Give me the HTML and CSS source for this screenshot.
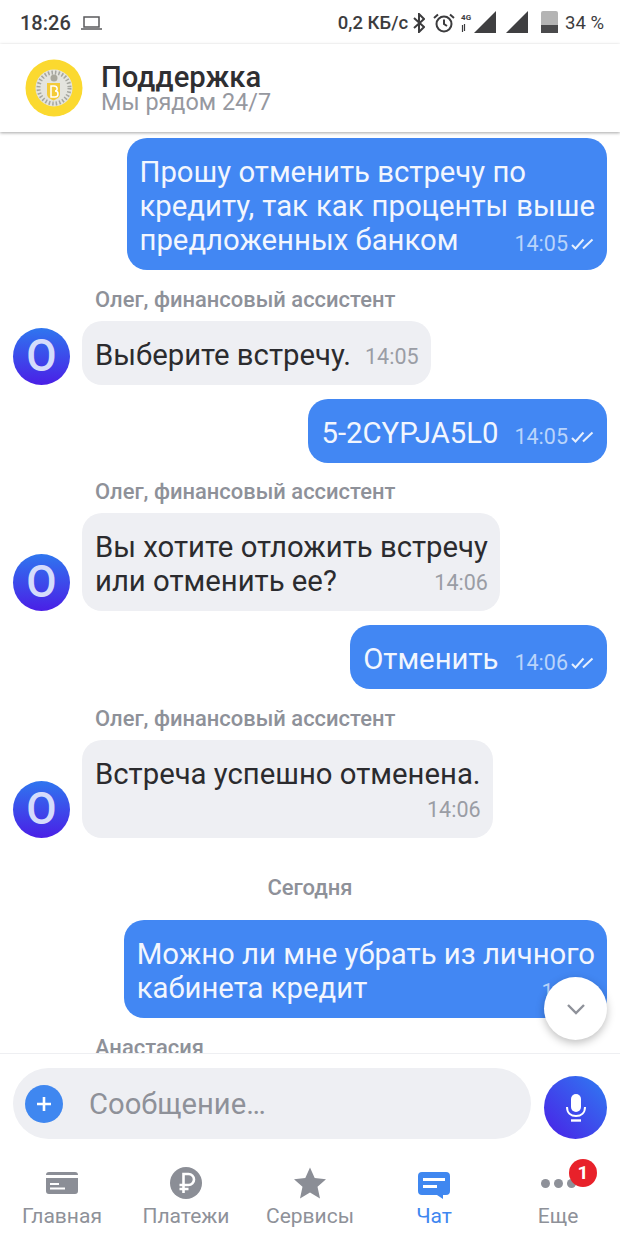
FILE: index.html
```html
<!DOCTYPE html>
<html lang="ru">
<head>
<meta charset="utf-8">
<title>Поддержка</title>
<link rel="stylesheet" href="styles.css">
</head>
<body>
<div class="app">
  <div class="status">
    <div class="status-left">
      <span class="clock">18:26</span>
      <svg class="ic-laptop" viewBox="0 0 21 14"><path d="M3 1h15v10H3zM0 13h21" fill="none" stroke="#5a5a5c" stroke-width="1.5"/></svg>
    </div>
    <div class="status-right">
      <span class="speed">0,2 КБ/с</span>
      <svg class="ic-bt" viewBox="0 0 12 20"><path d="M1 5l10 9-5 5V1l5 5L1 15" fill="none" stroke="#3c3c3e" stroke-width="2"/></svg>
      <svg class="ic-alarm" viewBox="0 0 22 20"><circle cx="11" cy="11" r="7.5" fill="none" stroke="#3c3c3e" stroke-width="2"/><path d="M11 6.5V11l3 2M1 5l4-3.5M21 5l-4-3.5" fill="none" stroke="#3c3c3e" stroke-width="2"/></svg>
      <div class="net"><span>4G</span><svg viewBox="0 0 5 8"><path d="M1.5 8V1M3.5 0v7" stroke="#3c3c3e" stroke-width="1.2"/></svg></div>
      <svg class="ic-signal" viewBox="0 0 22 22"><path d="M0 22L22 0v22z" fill="#3f3f41"/></svg>
      <svg class="ic-signal sim2" viewBox="0 0 22 22"><path d="M0 22L22 0v22z" fill="#3f3f41"/></svg>
      <div class="battery"></div>
      <span class="pct">34 %</span>
    </div>
  </div>

  <header class="head">
    <svg class="logo" viewBox="0 0 58 58">
      <circle cx="29" cy="29" r="28.500" fill="#fbd92f"/>
      <circle cx="29" cy="29" r="18.500" fill="#e4e4de"/>
      <circle cx="29" cy="29" r="15.500" fill="none" stroke="#a5a69f" stroke-width="4" stroke-dasharray="1.500 2"/>
      <circle cx="29" cy="19" r="3.500" fill="#a9a89c"/>
      <path d="M22 24h13v11c0 4-4 5-6.500 6.500C26 40 22 39 22 35z" fill="#f4cb38"/>
      <path d="M26 27h3c4 0 4 5 1 5 4 0 4 6 0 6h-4z" fill="none" stroke="#fff" stroke-width="1.500"/>
    </svg>
    <div class="head-text">
      <h1>Поддержка</h1>
      <p>Мы рядом 24/7</p>
    </div>
  </header>

  <main class="chat">
    <div class="msg out">
      <div class="bubble">
        <div>Прошу отменить встречу по</div>
        <div class="line-wide">кредиту, так как проценты выше</div>
        <div class="tail"><span>предложенных банком</span><span class="meta">14:05<svg class="ticks" viewBox="0 0 24 12"><path d="M1 7l3.500 3.500L12.500 1.500M12 10.500L21.500 1.500" fill="none" stroke="#e6effd" stroke-width="2"/></svg></span></div>
      </div>
    </div>

    <div class="name">Олег, финансовый ассистент</div>
    <div class="msg in">
      <div class="avatar">О</div>
      <div class="bubble">
        <div class="tail"><span>Выберите встречу.</span><span class="meta">14:05</span></div>
      </div>
    </div>

    <div class="msg out gap">
      <div class="bubble">
        <div class="tail"><span>5-2CYPJA5L0</span><span class="meta">14:05<svg class="ticks" viewBox="0 0 24 12"><path d="M1 7l3.500 3.500L12.500 1.500M12 10.500L21.500 1.500" fill="none" stroke="#e6effd" stroke-width="2"/></svg></span></div>
      </div>
    </div>

    <div class="name">Олег, финансовый ассистент</div>
    <div class="msg in">
      <div class="avatar">О</div>
      <div class="bubble">
        <div>Вы хотите отложить встречу</div>
        <div class="tail"><span>или отменить ее?</span><span class="meta">14:06</span></div>
      </div>
    </div>

    <div class="msg out gap">
      <div class="bubble">
        <div class="tail"><span>Отменить</span><span class="meta">14:06<svg class="ticks" viewBox="0 0 24 12"><path d="M1 7l3.500 3.500L12.500 1.500M12 10.500L21.500 1.500" fill="none" stroke="#e6effd" stroke-width="2"/></svg></span></div>
      </div>
    </div>

    <div class="name">Олег, финансовый ассистент</div>
    <div class="msg in">
      <div class="avatar">О</div>
      <div class="bubble">
        <div>Встреча успешно отменена.</div>
        <div class="tail end"><span class="meta">14:06</span></div>
      </div>
    </div>

    <div class="day">Сегодня</div>

    <div class="msg out">
      <div class="bubble">
        <div>Можно ли мне убрать из личного</div>
        <div class="tail"><span>кабинета кредит</span><span class="meta">11:52</span></div>
      </div>
    </div>

    <div class="name">Анастасия</div>

    <button class="scroll-down" aria-label="Вниз">
      <svg viewBox="0 0 20 12"><path d="M2 2l8 8 8-8" fill="none" stroke="#8e9199" stroke-width="2.400"/></svg>
    </button>
  </main>

  <div class="composer">
    <div class="input">
      <span class="plus"><svg viewBox="0 0 16 16"><path d="M8 1v14M1 8h14" stroke="#fff" stroke-width="2.600"/></svg></span>
      <span class="placeholder">Сообщение…</span>
    </div>
    <div class="mic">
      <svg viewBox="0 0 20 28"><rect x="5" y="0" width="10" height="18" rx="5" fill="#fff"/><path d="M1 13c0 6 4 9 9 9s9-3 9-9" fill="none" stroke="#fff" stroke-width="2"/><path d="M5 26.500h10" stroke="#fff" stroke-width="2.400"/></svg>
    </div>
  </div>

  <nav class="tabs">
    <div class="tab">
      <svg class="tab-ic" viewBox="0 0 32 22"><path d="M3 0h26a3 3 0 0 1 3 3H0a3 3 0 0 1 3-3zM0 6h32v13a3 3 0 0 1-3 3H3a3 3 0 0 1-3-3zM4 11v2h9v-2zM4 15.500v2h15v-2z" fill="#8b8e96" fill-rule="evenodd"/></svg>
      <span>Главная</span>
    </div>
    <div class="tab">
      <svg class="tab-ic" viewBox="0 0 32 32"><circle cx="16" cy="16" r="16" fill="#8b8e96"/><path d="M13.500 26V7h5a5.500 5.500 0 0 1 0 11H9.500M9.500 22h9" fill="none" stroke="#fff" stroke-width="2.600"/></svg>
      <span>Платежи</span>
    </div>
    <div class="tab">
      <svg class="tab-ic" viewBox="0 0 32 31"><path d="M16 0l4.700 10.500 11.300 1.200-8.500 7.600L26 31l-10-6-10 6 2.500-11.700L0 11.700l11.300-1.200z" fill="#8b8e96"/></svg>
      <span>Сервисы</span>
    </div>
    <div class="tab active">
      <svg class="tab-ic" viewBox="0 0 32 27" preserveAspectRatio="xMidYMax meet"><path d="M4 0h24a4 4 0 0 1 4 4v15a4 4 0 0 1-4 4h-3v4l-6-4H4a4 4 0 0 1-4-4V4a4 4 0 0 1 4-4zM5 6v3h22V6zM5 13v3h14v-3z" fill="#3f87f0" fill-rule="evenodd"/></svg>
      <span>Чат</span>
    </div>
    <div class="tab">
      <div class="more"><i></i><i></i><i></i><b class="badge">1</b></div>
      <span>Еще</span>
    </div>
  </nav>
</div>
</body>
</html>
```

FILE: styles.css
```css
* { box-sizing: border-box; }
html, body { margin: 0; padding: 0; }
body { font-family: Roboto, "Noto Sans", sans-serif; background: #fff; color: #2b2b2e; }

.app { width: 620px; height: 1240px; display: flex; flex-direction: column; overflow: hidden; }

.status { height: 44px; flex: none; display: flex; justify-content: space-between; align-items: center; padding: 1px 16px 0 20px; color: #3c3c3e; }
.status-left, .status-right { display: flex; align-items: center; }
.clock { font-size: 20px; font-weight: 500; }
.ic-laptop { width: 21px; height: 14px; margin-left: 10px; }
.speed { font-size: 18.5px; font-weight: 500; }
.ic-bt { width: 12px; height: 20px; margin-left: 5px; }
.ic-alarm { width: 22px; height: 20px; margin-left: 8px; }
.net { width: 13px; margin-left: 6px; display: flex; flex-direction: column; align-items: flex-start; font-size: 8px; font-weight: 700; line-height: 9px; }
.net svg { width: 5px; height: 8px; margin-top: 2px; }
.ic-signal { width: 22px; height: 22px; margin-top: -2px; }
.sim2 { margin-left: 10px; }
.battery { width: 17px; height: 22px; margin: -2px 0 0 13px; background: linear-gradient(#b4b4b4 0 64%, #4a4a4c 64%); border-radius: 2px 2px 0 0; }
.pct { font-size: 18.5px; margin-left: 7px; }

.head { height: 88px; flex: none; display: flex; align-items: flex-start; padding: 15px 0 0 25px; box-shadow: 0 1px 3px rgba(0,0,0,.35); position: relative; z-index: 2; background: #fff; }
.logo { width: 58px; height: 58px; flex: none; }
.head-text { margin-left: 18px; display: flex; flex-direction: column; }
.head-text h1 { margin: 5px 0 0; font-size: 29.2px; line-height: 26px; font-weight: 500; color: #2f2f32; }
.head-text p { margin: 1px 0 0; font-size: 23.4px; line-height: 22px; color: #96989f; }

.chat { flex: 1; min-height: 0; overflow: hidden; position: relative; padding: 6px 13px 0; display: flex; flex-direction: column; font-size: 29.3px; line-height: 34px; }
.msg { display: flex; flex: none; }
.msg.out { justify-content: flex-end; }
.msg.in { align-items: flex-end; gap: 12px; }
.msg.gap { margin-top: 14px; }

.bubble { padding: 17px 12px 13px 13px; border-radius: 20px; white-space: nowrap; }
.out .bubble { background: #4287f3; color: #f2f6fe; }
.in .bubble { background: #eeeff3; color: #2b2b2e; }
.line-wide { word-spacing: 0.75px; }

.tail { display: flex; justify-content: space-between; gap: 14px; }
.tail.end { justify-content: flex-end; }
.meta { font-size: 21.5px; line-height: 30px; color: #9a9da5; display: inline-flex; align-items: center; padding-top: 4px; }
.out .meta { color: #b9d4fb; padding: 8px 0 0 2px; line-height: 26px; }
.ticks { width: 24px; height: 12px; margin-left: 3px; }

.name { flex: none; margin: 16.5px 0 0 82px; padding-bottom: 8px; font-size: 21.95px; line-height: 26px; font-weight: 500; color: #8e9199; }
.avatar { width: 57px; height: 57px; flex: none; border-radius: 50%; background: linear-gradient(180deg, #2f76ef, #4a1fe6); color: #d5dcfb; font-size: 44px; font-weight: 500; line-height: 57px; text-align: center; }

.day { flex: none; margin: 37px 0 19.5px; text-align: center; font-size: 22px; line-height: 26px; font-weight: 500; color: #8e9199; }

.scroll-down { position: absolute; right: 13px; top: 845px; width: 63px; height: 63px; padding: 0; border: 0; border-radius: 50%; background: #fff; box-shadow: 0 3px 8px rgba(0,0,0,.25); display: flex; align-items: center; justify-content: center; }
.scroll-down svg { width: 20px; height: 12px; }

.composer { flex: none; height: 87px; display: flex; align-items: flex-start; justify-content: space-between; padding: 14px 13px 0; border-top: 1px solid #eeeff2; background: #fff; position: relative; }
.input { width: 518px; height: 71px; border-radius: 36px; background: #eeeff3; display: flex; align-items: center; padding-left: 12px; }
.plus { width: 38px; height: 38px; border-radius: 50%; background: #3f87f0; display: flex; align-items: center; justify-content: center; }
.plus svg { width: 16px; height: 16px; }
.placeholder { margin-left: 26px; font-size: 29.2px; color: #8e9199; }
.mic { width: 63px; height: 63px; margin-top: 8px; border-radius: 50%; background: linear-gradient(45deg, #4a1fe6, #2f7cf2); display: flex; align-items: center; justify-content: center; }
.mic svg { width: 20px; height: 28px; }

.tabs { flex: none; height: 100px; display: grid; grid-template-columns: repeat(5, 1fr); }
.tab { display: flex; flex-direction: column; align-items: center; font-size: 21px; line-height: 26px; color: #8e9199; position: relative; padding-top: 27px; }
.tab-ic { height: 32px; width: 32px; margin-bottom: 4px; }
.tab.active { color: #3f87f0; }
.more { height: 32px; margin-bottom: 4px; display: flex; align-items: center; gap: 4px; position: relative; }
.more i { width: 9px; height: 9px; border-radius: 50%; background: #8e9199; }
.badge { position: absolute; left: 28.5px; top: -8px; width: 28px; height: 28px; border-radius: 50%; background: #e8212a; color: #fff; font-size: 19px; line-height: 28px; font-weight: 700; text-align: center; }
```
